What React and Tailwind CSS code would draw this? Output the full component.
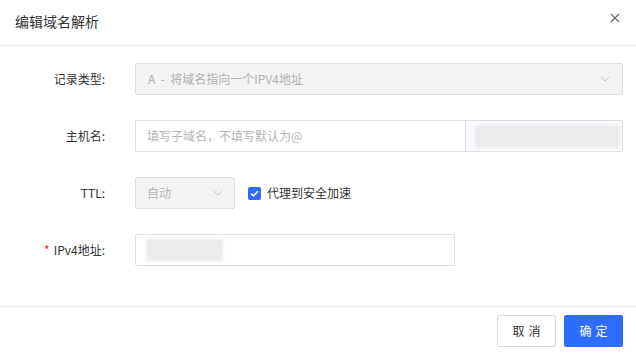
import React from 'react'

const font = { fontFamily: '"Noto Sans CJK SC", "Noto Sans", sans-serif' }

function Chevron({ className }) {
  return (
    <svg className={className} width="10" height="6" viewBox="0 0 10 6" fill="none">
      <path d="M1 1l4 4 4-4" stroke="#c4c4c4" strokeWidth="1" />
    </svg>
  )
}

function Row({ label, required, children }) {
  return (
    <div className="flex items-center h-[32px]">
      <label className="w-[105px] shrink-0 text-right text-[12px] text-[#333] mr-[30px]">
        {required && <span className="text-[#f5222d] mr-[4px]">*</span>}
        {label}
      </label>
      {children}
    </div>
  )
}

export default function App() {
  return (
    <div className="w-[636px] h-[355px] bg-white flex flex-col" style={font}>
      <div className="h-[46px] shrink-0 flex items-center justify-between pl-[15px] pr-[16px] border-b border-[#ebebeb]">
        <h2 className="text-[14px] text-[#333] mb-[2px]">编辑域名解析</h2>
        <svg width="10" height="10" viewBox="0 0 10 10" className="mb-[9px]">
          <path d="M1 1l8 8M9 1l-8 8" stroke="#666" strokeWidth="1.1" />
        </svg>
      </div>

      <div className="flex-1 flex flex-col gap-[25px] pt-[17px] pr-[13px]">
        <Row label="记录类型:">
          <div className="flex-1 h-[32px] flex items-center justify-between px-[12px] bg-[#f3f3f3] border border-[#dedede] rounded-[2px] text-[12px] text-[#b0b0b0]">
            <span>A&nbsp; - &nbsp;将域名指向一个IPV4地址</span>
            <Chevron />
          </div>
        </Row>

        <Row label="主机名:">
          <div className="flex-1 h-[32px] flex border border-[#dedede] rounded-[2px]">
            <div className="w-[329px] flex items-center px-[11px] text-[12px] text-[#b5b5b5]">
              填写子域名，不填写默认为@
            </div>
            <div className="flex-1 border-l border-[#dedede] bg-[#fafbfe] flex items-center pl-[9px] pr-[2px]">
              <div className="w-full h-[23px] rounded-[2px] bg-[#ebebed] blur-[1.5px]" />
            </div>
          </div>
        </Row>

        <Row label="TTL:">
          <div className="w-[100px] h-[32px] flex items-center justify-between px-[11px] bg-[#f3f3f3] border border-[#dedede] rounded-[2px] text-[12px] text-[#b5b5b5]">
            <span>自动</span>
            <Chevron />
          </div>
          <div className="flex items-center ml-[13px] gap-[6px]">
            <span className="w-[13px] h-[13px] rounded-[2px] bg-[#2e6bf6] flex items-center justify-center">
              <svg width="9" height="7" viewBox="0 0 9 7" fill="none">
                <path d="M1 3.5l2.4 2.3L8 1.2" stroke="#fff" strokeWidth="1.6" />
              </svg>
            </span>
            <span className="text-[12px] text-[#333]">代理到安全加速</span>
          </div>
        </Row>

        <Row label="IPv4地址:" required>
          <div className="w-[320px] h-[32px] flex items-center px-[10px] border border-[#dedede] rounded-[2px]">
            <div className="w-[77px] h-[22px] rounded-[2px] bg-[#ebebed] blur-[1.5px]" />
          </div>
        </Row>
      </div>

      <div className="h-[49px] shrink-0 border-t border-[#ebebeb] flex justify-end items-start gap-[8px] pt-[8px] pr-[13px]">
        <button className="w-[59px] h-[32px] border border-[#d9d9d9] rounded-[2px] bg-white text-[12px] text-[#333] tracking-[4px] pl-[4px]">
          取消
        </button>
        <button className="w-[59px] h-[32px] rounded-[2px] bg-[#2e6bff] text-[12px] text-white tracking-[4px] pl-[4px]">
          确定
        </button>
      </div>
    </div>
  )
}
